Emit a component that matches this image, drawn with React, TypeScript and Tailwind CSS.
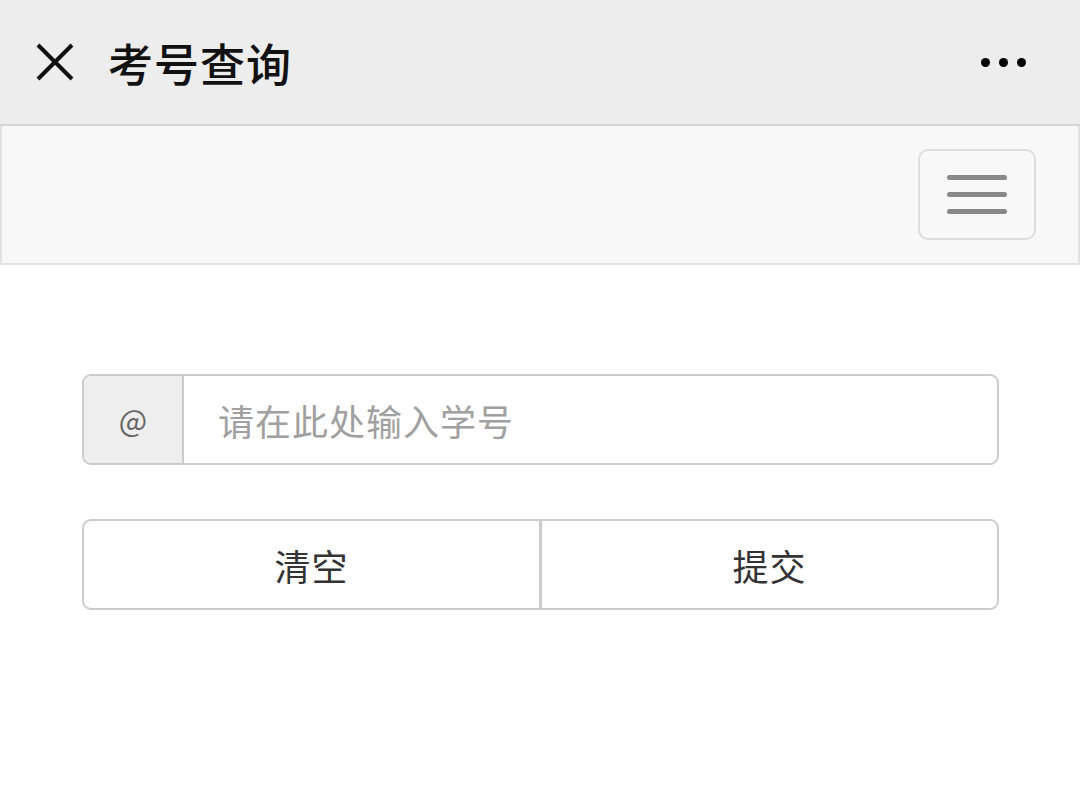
import React from "react";

export default function App() {
  return (
    <div
      className="w-[1080px] h-[806px] bg-white overflow-hidden"
      style={{ fontFamily: '"Noto Sans CJK SC", "Noto Sans", sans-serif' }}
    >
      {/* Title bar */}
      <div className="h-[126px] bg-[#ededed] border-b-2 border-[#d6d6d6] flex items-center pl-[36px] pr-[54px]">
        <svg width="38" height="38" viewBox="0 0 38 38" className="shrink-0">
          <path d="M2 2 L36 36 M36 2 L2 36" stroke="#111" strokeWidth="4" strokeLinecap="butt" />
        </svg>
        <h1 className="ml-[34px] text-[45px] font-medium text-[#111] leading-none tracking-[1px]">考号查询</h1>
        <div className="ml-auto flex items-center gap-[9px]">
          <span className="w-[9px] h-[9px] rounded-full bg-black" />
          <span className="w-[9px] h-[9px] rounded-full bg-black" />
          <span className="w-[9px] h-[9px] rounded-full bg-black" />
        </div>
      </div>

      {/* Navbar */}
      <div className="h-[139px] bg-[#f8f8f8] border-x-2 border-b-2 border-[#e2e2e2] flex items-center justify-end pr-[42px]">
        <button className="w-[118px] h-[91px] rounded-[10px] border-2 border-[#dddddd] bg-[#f8f8f8] flex flex-col items-center justify-center gap-[12px]">
          <span className="block w-[60px] h-[5px] rounded-full bg-[#888]" />
          <span className="block w-[60px] h-[5px] rounded-full bg-[#888]" />
          <span className="block w-[60px] h-[5px] rounded-full bg-[#888]" />
        </button>
      </div>

      {/* Form */}
      <div className="px-[82px] pt-[109px]">
        <div className="flex h-[91px] w-[917px] rounded-[9px] border-2 border-[#cccccc] overflow-hidden">
          <div className="w-[100px] bg-[#eeeeee] border-r-2 border-[#cccccc] flex items-center justify-center text-[30px] text-[#666]">
            @
          </div>
          <div className="flex-1 flex items-center pl-[34px] text-[36px] text-[#a0a0a0] tracking-[1px]">
            请在此处输入学号
          </div>
        </div>

        <div className="mt-[54px] flex h-[91px] w-[917px]">
          <button className="flex-1 rounded-l-[9px] border-2 border-[#cccccc] bg-white text-[36px] text-[#333] tracking-[1px]">
            清空
          </button>
          <button className="flex-1 -ml-[2px] rounded-r-[9px] border-2 border-l-[3px] border-[#cccccc] bg-white text-[36px] text-[#333] tracking-[1px]">
            提交
          </button>
        </div>
      </div>
    </div>
  );
}
